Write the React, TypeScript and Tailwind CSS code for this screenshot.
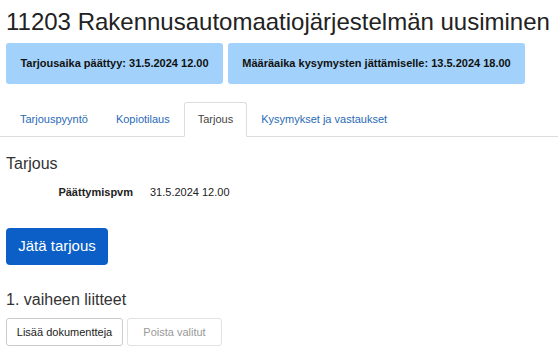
export default function App() {
  const tabs = ['Tarjouspyyntö', 'Kopiotilaus', 'Tarjous', 'Kysymykset ja vastaukset'];
  const active = 'Tarjous';

  return (
    <div className="w-[558px] h-[354px] overflow-hidden bg-white font-['Liberation_Sans',Arial,sans-serif] text-[#222]">
      <h1 className="px-[6px] pt-[7px] text-[24px] leading-[30px] text-[#222] whitespace-nowrap">
        11203 Rakennusautomaatiojärjestelmän uusiminen
      </h1>

      {/* Deadlines */}
      <div className="flex gap-[5px] px-[6px] mt-[6px]">
        <div className="w-[217px] h-[41px] flex items-center justify-center rounded-[3px] bg-[#a2d2fb] text-[11px] font-bold text-[#111]">
          Tarjousaika päättyy: 31.5.2024 12.00
        </div>
        <div className="w-[297px] h-[41px] flex items-center justify-center rounded-[3px] bg-[#a2d2fb] text-[11px] font-bold text-[#111]">
          Määräaika kysymysten jättämiselle: 13.5.2024 18.00
        </div>
      </div>

      {/* Tabs */}
      <div className="mt-[18px] flex pl-[6px] border-b border-[#dddddd] h-[35px]">
        {tabs.map((t) => (
          <div
            key={t}
            className={
              t === active
                ? 'h-[35px] -mb-px px-[13px] flex items-center text-[11px] text-[#444] bg-white border border-[#dddddd] border-b-white rounded-t-[3px]'
                : 'h-[34px] px-[14px] flex items-center text-[11px] text-[#2a6ab6]'
            }
          >
            {t}
          </div>
        ))}
      </div>

      <div className="px-[6px]">
        <h2 className="mt-[17px] text-[16px] leading-[20px] text-[#333]">Tarjous</h2>
        <div className="mt-[11px] flex text-[11px] leading-[14px]">
          <div className="w-[127px] text-right font-bold text-[#222]">Päättymispvm</div>
          <div className="ml-[17px] text-[#222]">31.5.2024 12.00</div>
        </div>

        <button className="mt-[29px] w-[102px] h-[37px] rounded-[4px] bg-[#0b5fc6] text-white text-[15px]">
          Jätä tarjous
        </button>

        <h2 className="mt-[25px] text-[16px] leading-[20px] text-[#333]">1. vaiheen liitteet</h2>
        <div className="mt-[8px] flex gap-[4px]">
          <button className="w-[117px] h-[28px] rounded-[3px] border border-[#cccccc] bg-white text-[11px] text-[#222]">
            Lisää dokumentteja
          </button>
          <button className="w-[95px] h-[28px] rounded-[3px] border border-[#e2e2e2] bg-white text-[11px] text-[#999]">
            Poista valitut
          </button>
        </div>
      </div>
    </div>
  );
}
